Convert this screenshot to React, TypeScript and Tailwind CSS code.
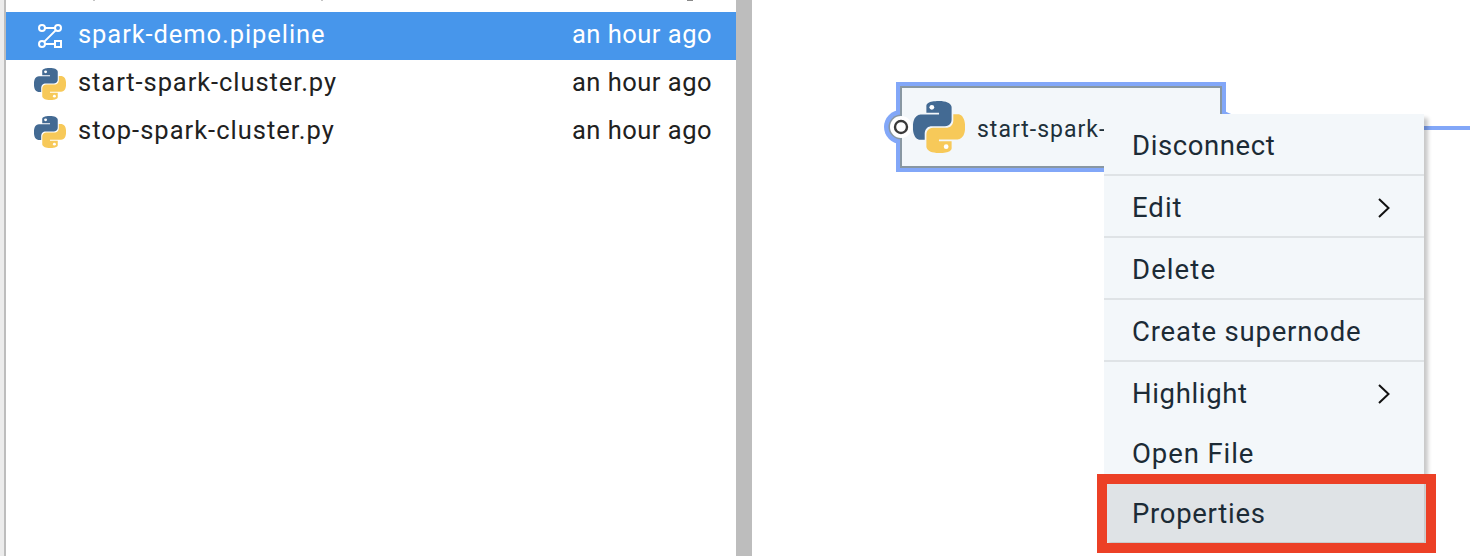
const BLUE_PATH =
  'M14.25.18l.9.2.73.26.59.3.45.32.34.34.25.34.16.33.1.3.04.26.02.2-.01.13V8.5l-.05.63-.13.55-.21.46-.26.38-.3.31-.33.25-.35.19-.35.14-.33.1-.3.07-.26.04-.21.02H8.77l-.69.05-.59.14-.5.22-.41.27-.33.32-.27.35-.2.36-.15.37-.1.35-.07.32-.04.27-.02.21v3.06H3.17l-.21-.03-.28-.07-.32-.12-.35-.18-.36-.26-.36-.36-.35-.46-.32-.59-.28-.73-.21-.88-.14-1.05-.05-1.23.06-1.22.16-1.04.24-.87.32-.71.36-.57.4-.44.42-.33.42-.24.4-.16.36-.1.32-.05.24-.01h.16l.06.01h8.16v-.83H6.18l-.01-2.75-.02-.37.05-.34.11-.31.17-.28.25-.26.31-.23.38-.2.44-.18.51-.15.58-.12.64-.1.71-.06.77-.04.84-.02 1.27.05z';
const YELLOW_PATH =
  'M21.04 6.11l.28.06.32.12.35.18.36.27.36.35.35.47.32.59.28.73.21.88.14 1.04.05 1.23-.06 1.23-.16 1.04-.24.86-.32.71-.36.57-.4.45-.42.33-.42.24-.4.16-.36.09-.32.05-.24.02-.16-.01h-8.22v.82h5.84l.01 2.76.02.36-.05.34-.11.31-.17.29-.25.25-.31.24-.38.2-.44.17-.51.15-.58.13-.64.09-.71.07-.77.04-.84.01-1.27-.04-1.07-.14-.9-.2-.73-.25-.59-.3-.45-.33-.34-.34-.25-.34-.16-.33-.1-.3-.04-.25-.02-.2.01-.13v-5.34l.05-.64.13-.54.21-.46.26-.38.3-.32.33-.24.35-.2.35-.14.33-.1.3-.06.26-.04.21-.02.13-.01h5.84l.69-.05.59-.14.5-.21.41-.28.33-.32.27-.35.2-.36.15-.36.1-.35.07-.32.04-.28.02-.21V6.07h2.09l.14.01z';

function PythonIcon({ className }: { className: string }) {
  return (
    <svg viewBox="0 0 24 24" className={className}>
      <path d={BLUE_PATH} fill="#436a93" />
      <path d={YELLOW_PATH} fill="#f7c959" />
      <circle cx="8.69" cy="2.9" r="1.1" fill="#fff" />
      <circle cx="15.3" cy="21.1" r="1.1" fill="#fff" />
    </svg>
  );
}

function PipelineIcon() {
  return (
    <svg viewBox="0 0 32 32" className="size-8 shrink-0" fill="none" stroke="#fff" strokeWidth="2">
      <circle cx="8" cy="8" r="3" />
      <circle cx="24" cy="8" r="3" />
      <circle cx="8" cy="24" r="3" />
      <rect x="21" y="21" width="6" height="6" />
      <path d="M11 8h10M11 24h10M21.9 10.1L10.1 21.9" />
    </svg>
  );
}

const files = [
  { name: 'spark-demo.pipeline', spacing: 'tracking-[0.93px]', kind: 'pipeline' },
  { name: 'start-spark-cluster.py', spacing: 'tracking-[0.92px]', kind: 'python' },
  { name: 'stop-spark-cluster.py', spacing: 'tracking-[1px]', kind: 'python' },
];

const menu = [
  { label: 'Disconnect', spacing: 'tracking-[0.6px]', box: 'h-[62px] border-b-2' },
  { label: 'Edit', spacing: 'tracking-[1px]', box: 'h-[62px] border-b-2', sub: true },
  { label: 'Delete', spacing: 'tracking-[1.1px]', box: 'h-[62px] border-b-2' },
  { label: 'Create supernode', spacing: 'tracking-[0.8px]', box: 'h-[62px] border-b-2' },
  { label: 'Highlight', spacing: 'tracking-[0.65px]', box: 'h-[60px]', sub: true },
  { label: 'Open File', spacing: 'tracking-[0.9px]', box: 'h-[60px]' },
  { label: 'Properties', spacing: 'tracking-[0.7px]', box: 'h-[60px] bg-[#dfe3e6]' },
];

export default function App() {
  return (
    <div className="flex h-[556px] w-[1470px] overflow-hidden bg-white font-['Roboto',sans-serif]">
      <aside className="w-1.5 shrink-0 border-r-2 border-[#bdbdbd] bg-[#ececec]" />
      <section className="w-[730px] shrink-0 overflow-hidden">
        {/* Descender tips of the row scrolled out above */}
        <svg viewBox="6 0 730 12" className="block h-3 w-[730px]" fill="#c4c4c4">
          <rect x="93" width="2" height="1" />
          <rect x="321" width="2" height="1" />
          <rect x="687" width="6" height="1" fill="#8a8a8a" />
        </svg>
        <ul>
          {files.map((f) => (
            <li
              key={f.name}
              className={`flex h-12 items-center pr-6 pl-7 text-[25.5px] leading-8 whitespace-nowrap ${
                f.kind === 'pipeline' ? 'bg-[#4796eb] text-white' : 'text-[#212121]'
              }`}
            >
              {f.kind === 'pipeline' ? <PipelineIcon /> : <PythonIcon className="size-8 shrink-0" />}
              <span className={`-mt-1 ml-3 ${f.spacing}`}>{f.name}</span>
              <span className="-mt-1 ml-auto tracking-[0.5px]">an hour ago</span>
            </li>
          ))}
        </ul>
      </section>
      <div className="w-4 shrink-0 bg-[#bdbdbd]" />
      <main className="relative flex-1 overflow-hidden">
        <svg className="absolute inset-0 size-full" viewBox="752 0 718 556">
          <path d="M1420 128H1470" stroke="#82a7f8" strokeWidth="4" />
          <path d="M1222 110l9 4v28h-9z" fill="#82a7f8" />
          <circle cx="901" cy="127" r="17" fill="#82a7f8" />
          <rect x="896" y="82" width="330" height="90" fill="#82a7f8" />
          <rect x="900" y="86" width="322" height="82" fill="#8897a2" />
          <circle cx="901" cy="127" r="12.5" fill="#8897a2" />
          <rect x="902" y="88" width="318" height="78" fill="#f3f7fa" />
          <circle cx="901" cy="127" r="11" fill="#fff" />
          <circle cx="901" cy="127" r="6" fill="#fff" stroke="#393939" strokeWidth="2.4" />
        </svg>
        <div className="absolute top-[88px] left-[161px] flex h-[78px] items-center">
          <PythonIcon className="size-[52px]" />
          <span className="mt-1.5 ml-3 text-[23px] tracking-[1px] whitespace-nowrap text-[#20303a]">start-spark-</span>
        </div>
        <nav className="absolute top-[114px] left-[352px] w-[320px] bg-[#f3f7fa] shadow-[4px_4px_4px_rgba(0,0,0,0.22)]">
          {menu.map((m) => (
            <div
              key={m.label}
              className={`flex items-center justify-between border-[#dfe3e6] pr-[34px] pl-7 text-[27.5px] leading-9 whitespace-nowrap text-[#1c2b36] ${m.box}`}
            >
              <span className={`mt-1 ${m.spacing}`}>{m.label}</span>
              {m.sub && (
                <svg viewBox="0 0 12 20" className="mt-1 h-5 w-3" fill="none" stroke="#111" strokeWidth="2">
                  <path d="M1 1l9.5 9L1 19" />
                </svg>
              )}
            </div>
          ))}
        </nav>
        <div className="absolute top-[474px] left-[345px] h-[79px] w-[339px] border-[10px] border-[#ec4026]" />
      </main>
    </div>
  );
}
